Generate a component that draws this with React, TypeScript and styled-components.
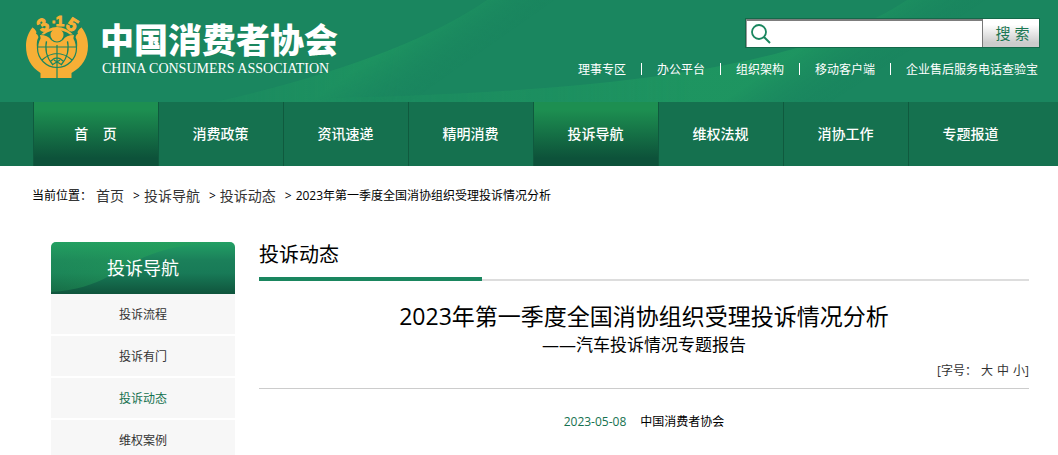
import React from "react";
import styled, { createGlobalStyle } from "styled-components";

const GlobalStyle = createGlobalStyle`
  * { box-sizing: border-box; }
  body {
    margin: 0;
    background: #fff;
    color: #000;
    font: 12px/20px "Open Sans", "Noto Sans CJK SC", sans-serif;
  }
  a { color: inherit; text-decoration: none; }
  ul, ol { margin: 0; padding: 0; list-style: none; }
  h1, h2, p { margin: 0; font-weight: 400; }
`;

const Header = styled.header`
  position: relative;
  display: flex;
  justify-content: space-between;
  height: 102px;
  padding: 0 18px 0 26px;
  background: #1a865f;
  color: #fff;
`;

const Waves = styled.svg`
  position: absolute;
  inset: 0;
  width: 100%;
  height: 100%;
`;

const Brand = styled.a`
  position: relative;
  display: flex;
  gap: 12px;
  padding-top: 15px;
`;

const EmblemArt = styled.svg`
  overflow: visible;
`;

const BrandText = styled.span`
  display: flex;
  flex-direction: column;
  padding-top: 2px;
`;

const BrandName = styled.strong`
  font: 900 34px/44px "Noto Sans CJK SC", sans-serif;
`;

const BrandLatin = styled.span`
  padding-left: 2px;
  font: 14px/16px "Liberation Serif", serif;
`;

const Tools = styled.div`
  position: relative;
  display: flex;
  flex-direction: column;
  align-items: flex-end;
  gap: 12px;
  padding-top: 18px;
`;

const SearchForm = styled.form`
  display: flex;
  align-items: center;
  width: 295px;
  height: 30px;
  border: 1px solid #14694a;
`;

const SearchField = styled.label`
  display: flex;
  flex: 1;
  align-items: center;
  height: 28px;
  padding-left: 4px;
  border-top: 2px solid #7d7d7d;
  border-left: 1px solid #999;
  background: #fff;
`;

const SearchInput = styled.input`
  flex: 1;
  min-width: 0;
  height: 24px;
  border: 0;
  outline: 0;
  background: transparent;
  font: inherit;
`;

const SearchButton = styled.button`
  width: 57px;
  height: 28px;
  padding: 0 0 0 3px;
  border: 0;
  border-left: 1px solid #777;
  background: linear-gradient(#fff 20%, #ccc 85%);
  color: #1c7753;
  font: 15px/26px "Open Sans", "Noto Sans CJK SC", sans-serif;
`;

const QuickLinks = styled.ul`
  display: flex;
  padding-right: 2px;
  line-height: 20px;

  li + li::before {
    content: "";
    display: inline-block;
    width: 1px;
    height: 12px;
    margin: 0 15px;
    background: #fff;
    vertical-align: -1px;
  }
`;

const Nav = styled.nav`
  display: flex;
  justify-content: center;
  height: 64px;
  padding: 0 25px 0 33px;
  background: #15714f;
`;

const NavLink = styled.a<{ $active?: boolean }>`
  flex: 1;
  padding-right: 1px;
  border-left: 1px solid #0f5a3e;
  background: ${(p) =>
    p.$active ? "linear-gradient(#1d8f51 12%, #0d523a 88%)" : "none"};
  color: #fff;
  font-size: 14px;
  font-weight: 500;
  line-height: 64px;
  text-align: center;
  white-space: pre;
`;

const Breadcrumb = styled.nav`
  display: flex;
  align-items: center;
  height: 60px;
  padding: 0 32px;

  a {
    color: #333;
    font-size: 14px;
  }
`;

const Crumb = styled.span`
  margin-right: 9px;
`;

const Arrow = styled.span`
  margin-right: 4px;
`;

const Content = styled.div`
  display: flex;
  align-items: flex-start;
  gap: 24px;
  padding: 16px 29px 0 51px;
`;

const Sidebar = styled.aside`
  flex: 0 0 184px;
`;

const SideTitle = styled.h2`
  position: relative;
  overflow: hidden;
  height: 52px;
  border-radius: 5px 5px 0 0;
  background: linear-gradient(#22a065, #1b805a 35%, #187a57 60%, #0f543c);
  color: #fff;
  font-size: 18px;
  line-height: 52px;
  text-align: center;

  span { position: relative; }
`;

const SideLink = styled.a<{ $current?: boolean }>`
  display: block;
  height: 40px;
  margin-bottom: 2px;
  background: #f7f7f7;
  color: ${(p) => (p.$current ? "#15714f" : "#333")};
  line-height: 42px;
  text-align: center;
`;

const Main = styled.main`
  flex: 1;
  min-width: 0;
`;

const SectionHead = styled.div`
  display: flex;
  height: 39px;
  border-bottom: 2px solid #ddd;
`;

const SectionTitle = styled.h2`
  width: 29%;
  height: 39px;
  border-bottom: 4px solid #1a865f;
  font-size: 20px;
  line-height: 26px;
`;

const ArticleTitle = styled.h1`
  padding-top: 20px;
  font-size: 23px;
  line-height: 30px;
  text-align: center;
`;

const ArticleSubtitle = styled.p`
  font-size: 17px;
  line-height: 28px;
  text-align: center;
`;

const FontSize = styled.p`
  display: flex;
  justify-content: flex-end;
  height: 30px;
  padding-top: 2px;
  border-bottom: 1px solid #ccc;
  color: #333;
`;

const SizeButton = styled.button`
  height: 20px;
  margin: 0;
  padding: 0 0 0 4px;
  border: 0;
  background: none;
  color: inherit;
  font: inherit;
`;

const Meta = styled.p`
  display: flex;
  justify-content: center;
  gap: 14px;
  padding-top: 23px;

  time { color: #15714f; }
`;

const quickLinks = ["理事专区", "办公平台", "组织架构", "移动客户端", "企业售后服务电话查验宝"];
const navItems = ["首    页", "消费政策", "资讯速递", "精明消费", "投诉导航", "维权法规", "消协工作", "专题报道"];
const activeNav = [0, 4];
const sideItems = ["投诉流程", "投诉有门", "投诉动态", "维权案例"];

function Emblem() {
  const green = "#1a865f";
  const gold = "#f7af36";
  return (
    <EmblemArt width="62" height="63" viewBox="0 0 62 63" fill={gold} aria-hidden="true">
      {/* cupped hands */}
      <path d="M6.5 12.5C2 18 0 24 0 31C0 43 5 52 14.5 58V63H45.5V58C56 52 62 43 62 31C62 24 60 18 55.5 12.5L50 20H12Z" />
      <path d="M7 12.5L12.5 22Q10 27 11 33H51Q52 27 49.5 22L55 12.5L50 6H12Z" fill={green} />
      <path d="M6.5 12.5Q11 15 11.5 21Q9 28 11 36H4L2 22ZM55.5 12.5Q51 15 50.5 21Q53 28 51 36H58L60 22Z" />
      {/* globe */}
      <circle cx="31" cy="33" r="19.5" />
      <g fill="none" stroke={green} strokeWidth="1.2">
        <circle cx="31" cy="33" r="19.5" />
        <path d="M31 27V63M11.5 32H50.5M16 45Q31 32 46 45M21 24Q17 39 27 50M41 24Q45 39 35 50M25 46Q31 40 37 46M26 50L34 45M36 50L28 45" />
      </g>
      {/* eye */}
      <path d="M10 19Q14 5 31 5Q48 5 52 19L46 20Q40 29 31 29Q22 29 16 20Z" fill={green} />
      <path d="M15 19.5Q22 12 31 12Q40 12 47 19.5L44 19.5Q38 15 31 15Q24 15 18 19.5Z" />
      <path d="M14 20Q22 20 25 25Q31 30 37 25Q40 20 48 20L47 25Q42 25 39 28Q31 32 23 28Q20 25 15 25Z" />
      <circle cx="31" cy="20" r="6.5" />
      <g
        fontFamily="Liberation Sans"
        fontWeight="700"
        fontSize="18"
        textAnchor="middle"
        stroke={gold}
        strokeWidth="1"
      >
        <text transform="translate(20 15) rotate(-32)">3</text>
        <text x="28" y="11" fontSize="12">·</text>
        <text x="34" y="11" fontSize="15">1</text>
        <text transform="translate(43 15) rotate(32)">5</text>
      </g>
    </EmblemArt>
  );
}

function HeaderWaves() {
  return (
    <Waves viewBox="0 0 1058 102" preserveAspectRatio="none" aria-hidden="true">
      <defs>
        <linearGradient id="sweep" gradientUnits="userSpaceOnUse" x1="149" y1="215" x2="182" y2="262">
          <stop offset="0" stopColor="#1f9861" stopOpacity=".8" />
          <stop offset="1" stopColor="#1a865f" stopOpacity="0" />
        </linearGradient>
        <linearGradient id="swell" gradientUnits="userSpaceOnUse" x1="265" y1="404" x2="298" y2="454">
          <stop offset="0" stopColor="#1f9861" stopOpacity=".8" />
          <stop offset="1" stopColor="#1a865f" stopOpacity="0" />
        </linearGradient>
        <linearGradient id="rise" x1="0" y1="0" x2="1" y2="0">
          <stop offset="0" stopColor="#fff" stopOpacity=".2" />
          <stop offset=".5" stopColor="#fff" stopOpacity="1" />
        </linearGradient>
        <mask id="sweepMask">
          <rect x="200" width="400" height="102" fill="url(#rise)" />
        </mask>
        <mask id="swellMask">
          <rect x="330" width="728" height="102" fill="url(#rise)" />
        </mask>
      </defs>
      <path d="M215 102Q400 60 487 0H600V102Z" fill="url(#sweep)" mask="url(#sweepMask)" />
      <path d="M330 98C600 92 800 70 907 0H1058V102H330Z" fill="url(#swell)" mask="url(#swellMask)" />
    </Waves>
  );
}

export default function App() {
  return (
    <>
      <GlobalStyle />
      <Header>
        <HeaderWaves />
        <Brand href="#">
          <Emblem />
          <BrandText>
            <BrandName>中国消费者协会</BrandName>
            <BrandLatin>CHINA CONSUMERS ASSOCIATION</BrandLatin>
          </BrandText>
        </Brand>
        <Tools>
          <SearchForm onSubmit={(e) => e.preventDefault()}>
            <SearchField>
              <svg width="20" height="20" viewBox="0 0 20 20" fill="none" stroke="#1a865f" aria-hidden="true">
                <circle cx="8" cy="8" r="7" strokeWidth="1.8" />
                <path d="M13 13L19 19" strokeWidth="2" />
              </svg>
              <SearchInput type="text" aria-label="搜索" />
            </SearchField>
            <SearchButton type="submit">搜 索</SearchButton>
          </SearchForm>
          <QuickLinks>
            {quickLinks.map((t) => (
              <li key={t}><a href="#">{t}</a></li>
            ))}
          </QuickLinks>
        </Tools>
      </Header>
      <Nav>
        {navItems.map((t, i) => (
          <NavLink key={t} href="#" $active={activeNav.includes(i)}>{t}</NavLink>
        ))}
      </Nav>
      <Breadcrumb>
        <Arrow>当前位置：</Arrow>
        <Crumb><a href="#">首页</a></Crumb>
        <Arrow>&gt;</Arrow>
        <Crumb><a href="#">投诉导航</a></Crumb>
        <Arrow>&gt;</Arrow>
        <Crumb><a href="#">投诉动态</a></Crumb>
        <Arrow>&gt;</Arrow>
        <span>2023年第一季度全国消协组织受理投诉情况分析</span>
      </Breadcrumb>
      <Content>
        <Sidebar>
          <SideTitle>
            <Waves viewBox="0 0 184 52" preserveAspectRatio="none" aria-hidden="true">
              <defs>
                <linearGradient id="leaf" x1="0" y1="0" x2="1" y2="0">
                  <stop offset="0" stopColor="#25a05a" stopOpacity="0.3" />
                  <stop offset=".6" stopColor="#25a05a" stopOpacity=".6" />
                  <stop offset="1" stopColor="#25a05a" stopOpacity=".2" />
                </linearGradient>
              </defs>
              <path d="M0 50C70 46 70 8 150 2L184 0H0Z" fill="url(#leaf)" />
            </Waves>
            <span>投诉导航</span>
          </SideTitle>
          <ul>
            {sideItems.map((t) => (
              <li key={t}><SideLink href="#" $current={t === "投诉动态"}>{t}</SideLink></li>
            ))}
          </ul>
        </Sidebar>
        <Main>
          <SectionHead>
            <SectionTitle>投诉动态</SectionTitle>
          </SectionHead>
          <ArticleTitle>2023年第一季度全国消协组织受理投诉情况分析</ArticleTitle>
          <ArticleSubtitle>——汽车投诉情况专题报告</ArticleSubtitle>
          <FontSize>
            [字号：
            <SizeButton type="button">大</SizeButton>
            <SizeButton type="button">中</SizeButton>
            <SizeButton type="button">小</SizeButton>
            ]
          </FontSize>
          <Meta>
            <time dateTime="2023-05-08">2023-05-08</time>
            <span>中国消费者协会</span>
          </Meta>
        </Main>
      </Content>
    </>
  );
}
